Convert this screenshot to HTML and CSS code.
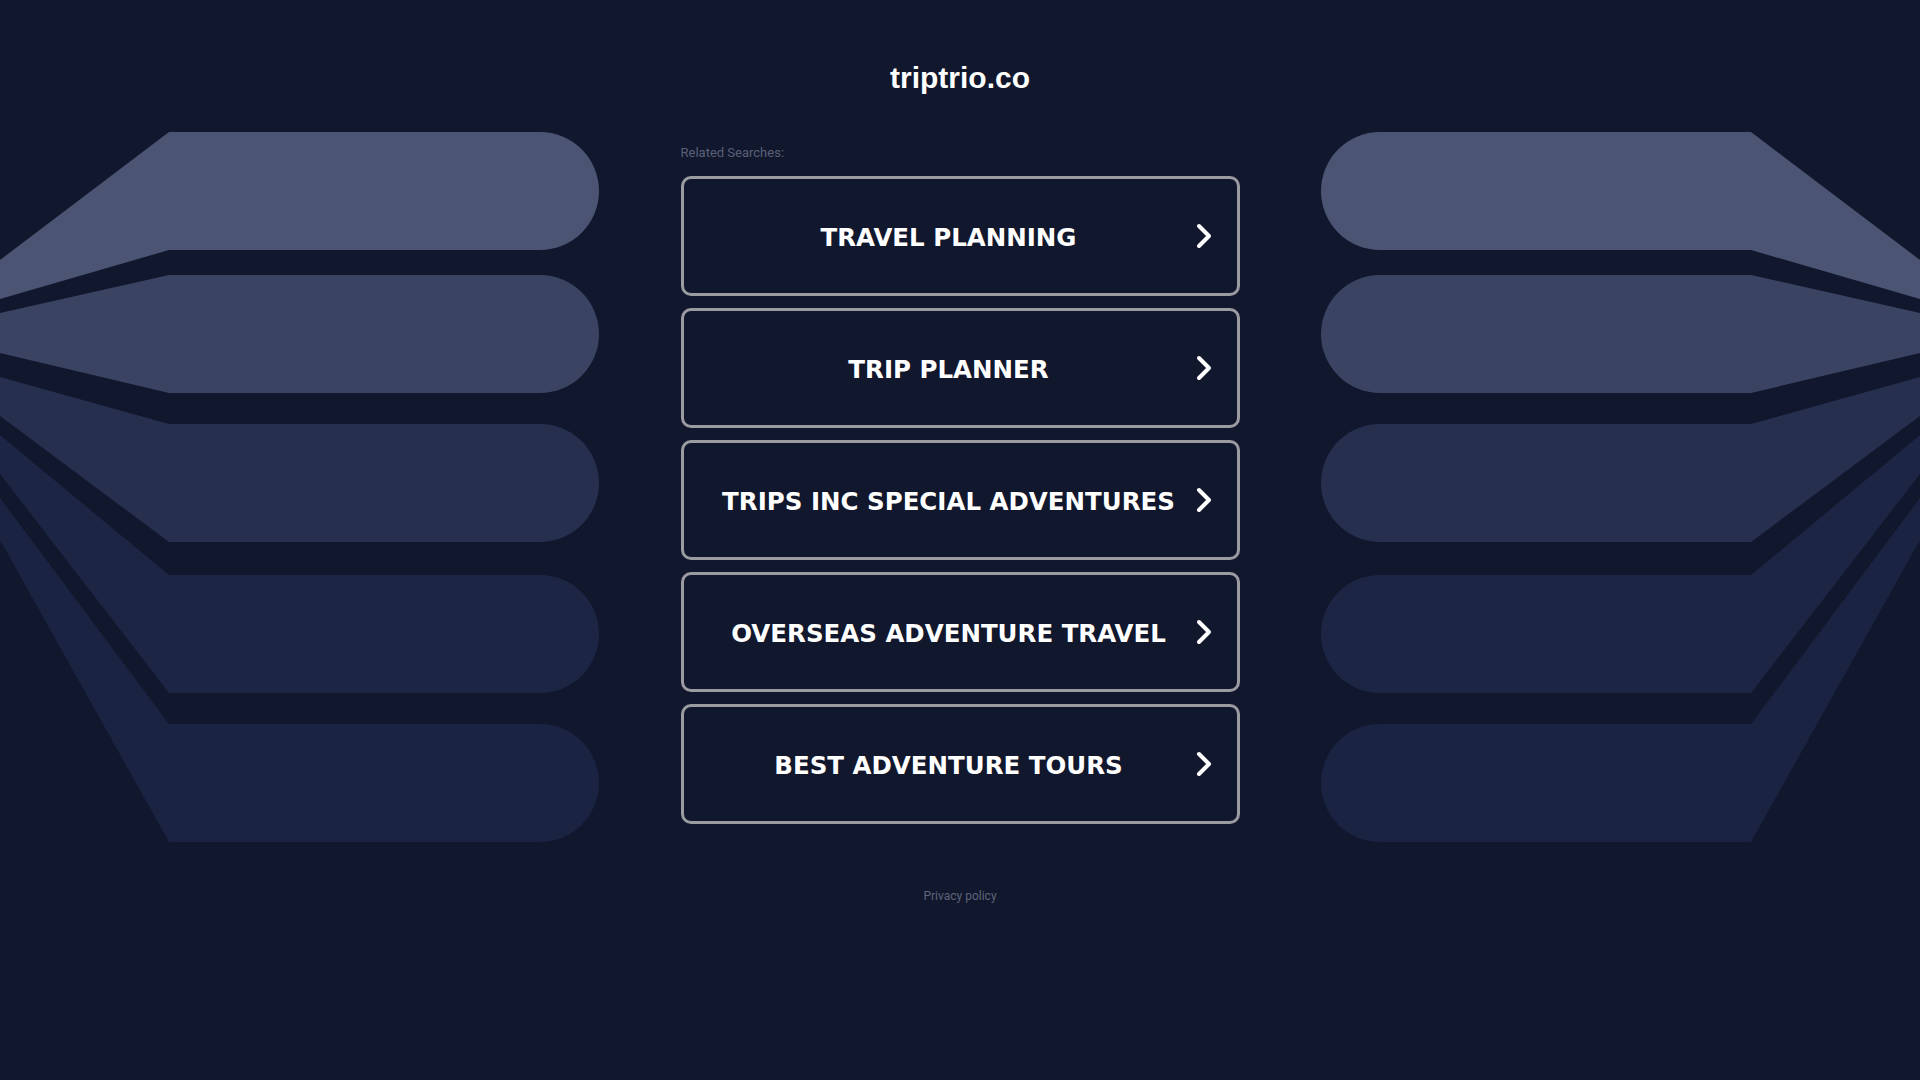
FILE: index.html
```html
<!DOCTYPE html>
<html lang="en">
<head>
    <meta charset="UTF-8">
    <meta name="viewport" content="width=device-width, initial-scale=1.0">
    <title>triptrio.co</title>
    <link rel="stylesheet" href="styles.css">
</head>
<body>
    <header class="site-head">
        <h1 class="domain">triptrio.co</h1>
    </header>

    <main class="stage">
        <!-- fan of pills on the left, mirrored on the right -->
        <svg class="fan" viewBox="0 0 599 710" aria-hidden="true">
            <path class="band band-1" d="M169,0 H540 A59,59 0 0 1 540,118 H169 L0,167 V128 Z"/>
            <path class="band band-2" d="M169,143 H540 A59,59 0 0 1 540,261 H169 L0,221 V181 Z"/>
            <path class="band band-3" d="M169,292 H540 A59,59 0 0 1 540,410 H169 L0,284 V245 Z"/>
            <path class="band band-4" d="M169,443 H540 A59,59 0 0 1 540,561 H169 L0,342 V303 Z"/>
            <path class="band band-5" d="M169,592 H540 A59,59 0 0 1 540,710 H169 L0,408 V366 Z"/>
        </svg>

        <section class="searches">
            <p class="searches-title">Related Searches:</p>
            <ul class="search-list">
                <li><a class="search-link" href="#"><span>TRAVEL PLANNING</span><svg class="chevron" viewBox="0 0 16 26"><path d="M3 3 L13 13 L3 23"/></svg></a></li>
                <li><a class="search-link" href="#"><span>TRIP PLANNER</span><svg class="chevron" viewBox="0 0 16 26"><path d="M3 3 L13 13 L3 23"/></svg></a></li>
                <li><a class="search-link" href="#"><span>TRIPS INC SPECIAL ADVENTURES</span><svg class="chevron" viewBox="0 0 16 26"><path d="M3 3 L13 13 L3 23"/></svg></a></li>
                <li><a class="search-link" href="#"><span>OVERSEAS ADVENTURE TRAVEL</span><svg class="chevron" viewBox="0 0 16 26"><path d="M3 3 L13 13 L3 23"/></svg></a></li>
                <li><a class="search-link" href="#"><span>BEST ADVENTURE TOURS</span><svg class="chevron" viewBox="0 0 16 26"><path d="M3 3 L13 13 L3 23"/></svg></a></li>
            </ul>
        </section>

        <svg class="fan fan-right" viewBox="0 0 599 710" aria-hidden="true">
            <path class="band band-1" d="M169,0 H540 A59,59 0 0 1 540,118 H169 L0,167 V128 Z"/>
            <path class="band band-2" d="M169,143 H540 A59,59 0 0 1 540,261 H169 L0,221 V181 Z"/>
            <path class="band band-3" d="M169,292 H540 A59,59 0 0 1 540,410 H169 L0,284 V245 Z"/>
            <path class="band band-4" d="M169,443 H540 A59,59 0 0 1 540,561 H169 L0,342 V303 Z"/>
            <path class="band band-5" d="M169,592 H540 A59,59 0 0 1 540,710 H169 L0,408 V366 Z"/>
        </svg>
    </main>

    <footer class="site-foot">
        <a class="privacy" href="#">Privacy policy</a>
    </footer>
</body>
</html>
```

FILE: styles.css
```css
html, body {
    margin: 0;
    padding: 0;
}
body {
    background-color: #11172d;
    font-family: "Liberation Sans", Arial, sans-serif;
    color: #ffffff;
    min-height: 1080px;
}
.site-head {
    padding-top: 61px;
    text-align: center;
}
.domain {
    margin: 0;
    font-size: 30px;
    line-height: 34px;
    font-weight: bold;
    color: #ffffff;
}
.stage {
    display: grid;
    grid-template-columns: 599px 1fr 599px;
    margin-top: 37px;
}
.fan {
    display: block;
    width: 599px;
    height: 710px;
}
.fan-right {
    transform: scaleX(-1);
}
.band-1 { fill: #4b5573; }
.band-2 { fill: #3a4361; }
.band-3 { fill: #262f4e; }
.band-4 { fill: #1d2544; }
.band-5 { fill: #1b2343; }

.searches {
    width: 559px;
    margin: 0 auto;
    padding-top: 12px;
}
.searches-title {
    margin: 0 0 15px 0;
    font-family: Roboto, "Liberation Sans", sans-serif;
    font-size: 13px;
    line-height: 17px;
    color: #5b6079;
}
.search-list {
    list-style: none;
    margin: 0;
    padding: 0;
    display: flex;
    flex-direction: column;
    gap: 12px;
}
.search-link {
    display: flex;
    align-items: center;
    box-sizing: border-box;
    height: 120px;
    padding: 0 25px 0 24px;
    border: 3px solid #9b9ba1;
    border-radius: 10px;
    color: #ffffff;
    text-decoration: none;
    font-family: "DejaVu Sans", Verdana, sans-serif;
    font-weight: bold;
    font-size: 24.5px;
}
.search-link span {
    flex: 1;
    padding-top: 3px;
    text-align: center;
}
.chevron {
    width: 16px;
    height: 26px;
    margin-left: 6px;
    fill: none;
    stroke: #ffffff;
    stroke-width: 4;
    stroke-linecap: round;
    stroke-linejoin: round;
}
.site-foot {
    text-align: center;
    padding-top: 44px;
}
.privacy {
    font-family: Roboto, "Liberation Sans", sans-serif;
    font-size: 12px;
    line-height: 16px;
    color: #5f6479;
    text-decoration: none;
}
```
